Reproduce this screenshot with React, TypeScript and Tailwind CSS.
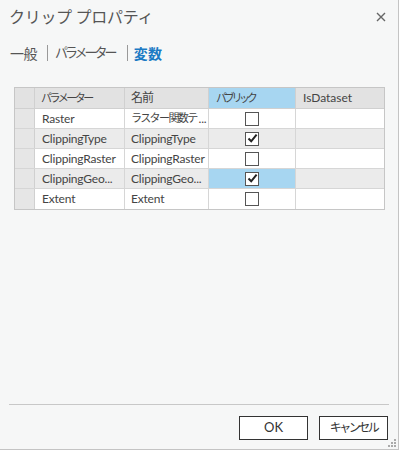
import React from "react";

interface Row {
  param: string;
  name: string;
  jpName?: boolean;
  isPublic: boolean;
  selected?: boolean;
}

const rows: Row[] = [
  { param: "Raster", name: "ラスター関数テ", jpName: true, isPublic: false },
  { param: "ClippingType", name: "ClippingType", isPublic: true },
  { param: "ClippingRaster", name: "ClippingRaster", isPublic: false },
  { param: "ClippingGeo...", name: "ClippingGeo...", isPublic: true, selected: true },
  { param: "Extent", name: "Extent", isPublic: false },
];

function Check({ checked }: { checked: boolean }) {
  return (
    <div className="w-[14px] h-[14px] border border-[#555] bg-white flex items-center justify-center">
      {checked && (
        <svg width="11" height="11" viewBox="0 0 11 11">
          <path d="M1.5 5.5 L4.2 8.3 L9.6 1.6" fill="none" stroke="#222" strokeWidth="2" />
        </svg>
      )}
    </div>
  );
}

export default function App() {
  return (
    <div
      className="w-[399px] h-[450px] bg-[#f6f7f7] border-r border-b border-[#c4c4c4] flex flex-col relative text-[#444]"
      style={{ fontFamily: 'Lato, "Noto Sans CJK JP", sans-serif' }}
    >
      {/* TITLE */}
      <div className="h-[34px] flex items-center justify-between pl-[9px] pr-[12px]">
        <span className="text-[16px] text-[#555] tracking-[-0.3px]">クリップ プロパティ</span>
        <svg width="10" height="10" viewBox="0 0 10 10">
          <path d="M1 1 L9 9 M9 1 L1 9" stroke="#666" strokeWidth="1.4" />
        </svg>
      </div>

      {/* TABS */}
      <div className="h-[36px] flex items-center pl-[10px] text-[14px] text-[#555] mt-[1px]">
        <span className="tracking-[-0.5px]">一般</span>
        <span className="ml-[10px] mr-[7px] w-px h-[16px] bg-[#999]" />
        <span className="text-[13px] tracking-[-3px]">パラメーター</span>
        <span className="ml-[12px] mr-[6px] w-px h-[16px] bg-[#999]" />
        <span className="text-[#1b7ac4] font-bold tracking-[0.5px]">変数</span>
      </div>

      {/* GRID */}
      <div className="mt-[16px] ml-[14px] w-[371px] border border-[#c6c6c6] bg-white text-[12px] text-[#444]">
        <div className="flex h-[21px] bg-[#e2e2e2] border-b border-[#d0d0d0]">
          <div className="w-[20px] border-r border-[#d0d0d0]" />
          <div className="w-[90px] border-r border-[#d0d0d0] pl-[6px] flex items-center text-[11px] tracking-[-2.5px] whitespace-nowrap">
            パラメーター
          </div>
          <div className="w-[84px] border-r border-[#d0d0d0] pl-[6px] flex items-center tracking-[-1px]">名前</div>
          <div className="w-[87px] border-r border-[#d0d0d0] pl-[7px] flex items-center bg-[#a7d6f1] text-[11px] tracking-[-3.3px] whitespace-nowrap">
            パブリック
          </div>
          <div className="flex-1 pl-[7px] flex items-center">IsDataset</div>
        </div>
        {rows.map((r, i) => (
          <div
            key={i}
            className={`flex h-[20px] border-b border-[#d6d6d6] last:border-b-0 ${i % 2 === 1 ? "bg-[#ebebeb]" : "bg-white"}`}
          >
            <div className="w-[20px] border-r border-[#d0d0d0] bg-[#e6e6e6]" />
            <div className="w-[90px] border-r border-[#d6d6d6] pl-[7px] flex items-center whitespace-nowrap overflow-hidden tracking-[-0.2px]">
              {r.param}
            </div>
            <div className="w-[84px] border-r border-[#d6d6d6] pl-[6px] flex items-center whitespace-nowrap overflow-hidden tracking-[-0.2px]">
              {r.jpName ? (
                <>
                  <span className="text-[11px] tracking-[-1.6px]">{r.name}</span>
                  <span className="ml-[2px]">...</span>
                </>
              ) : (
                r.name
              )}
            </div>
            <div
              className={`w-[87px] border-r border-[#d6d6d6] flex items-center justify-center ${r.selected ? "bg-[#a7d6f1]" : ""}`}
            >
              <Check checked={r.isPublic} />
            </div>
            <div className="flex-1" />
          </div>
        ))}
      </div>

      <div className="flex-1" />

      {/* FOOTER */}
      <div className="mx-[9px] h-px bg-[#c8c8c8]" />
      <div className="h-[44px] flex items-start justify-end gap-[11px] pr-[10px] pt-[11px]">
        <button className="w-[69px] h-[24px] border border-[#333] bg-white text-[13px] text-[#333]">OK</button>
        <button className="w-[69px] h-[24px] border border-[#333] bg-white text-[12px] text-[#333] tracking-[-2.5px]">
          キャンセル
        </button>
      </div>

      {/* RESIZE GRIP */}
      <svg className="absolute right-[1px] bottom-[1px]" width="9" height="9" viewBox="0 0 9 9">
        <rect x="6" y="0" width="2" height="2" fill="#aaa" />
        <rect x="3" y="3" width="2" height="2" fill="#aaa" />
        <rect x="6" y="3" width="2" height="2" fill="#aaa" />
        <rect x="0" y="6" width="2" height="2" fill="#aaa" />
        <rect x="3" y="6" width="2" height="2" fill="#aaa" />
        <rect x="6" y="6" width="2" height="2" fill="#aaa" />
      </svg>
    </div>
  );
}
